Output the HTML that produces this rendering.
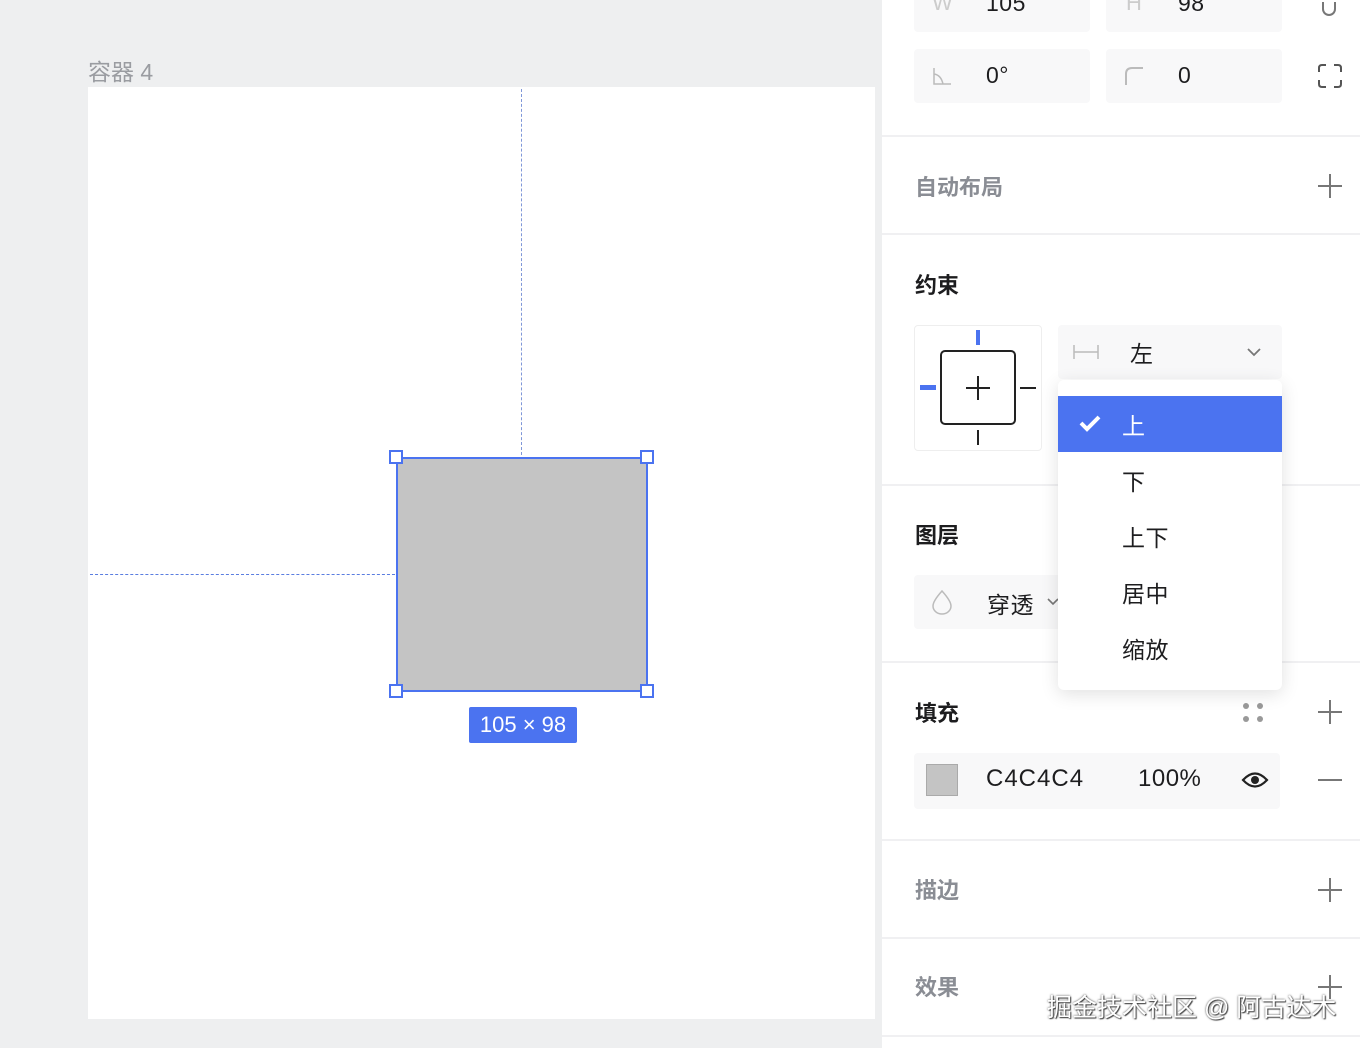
<!DOCTYPE html>
<html><head><meta charset="utf-8"><style>
*{margin:0;padding:0;box-sizing:border-box}
body{width:1360px;height:1048px;position:relative;overflow:hidden;background:#eeeff0;font-family:"Liberation Sans","Noto Sans CJK SC",sans-serif}
.a{position:absolute}
.panel{left:882px;top:0;width:478px;height:1048px;background:#fff}
.div{left:882px;width:478px;height:2px;background:#f0f0f2}
.field{background:#f8f8f9;border-radius:4px}
.t{font-size:23px;color:#1d1d1f;letter-spacing:.5px}
.h{font-size:22px;font-weight:bold;color:#1d1d1f}
.g{font-size:22px;color:#8a8d94;font-weight:bold}
.plus{width:24px;height:24px}
.plus:before{content:"";position:absolute;left:0;top:11px;width:24px;height:2px;background:#777}
.plus:after{content:"";position:absolute;left:11px;top:0;width:2px;height:24px;background:#777}
</style></head><body>
<div class="a" style="left:88px;top:53px;font-size:23px;color:#9a9ca1">容器 4</div>
<div class="a" style="left:88px;top:87px;width:787px;height:932px;background:#fff"></div>
<div class="a" style="left:521px;top:89px;height:366px;border-left:1px dashed #7f97d8"></div>
<div class="a" style="left:90px;top:574px;width:305px;border-top:1px dashed #5a7de0"></div>
<div class="a" style="left:396px;top:457px;width:252px;height:235px;background:#c4c4c4;border:2px solid #4b73f0"></div>
<div class="a" style="left:389px;top:450px;width:14px;height:14px;background:#fff;border:2px solid #4b73f0"></div>
<div class="a" style="left:640px;top:450px;width:14px;height:14px;background:#fff;border:2px solid #4b73f0"></div>
<div class="a" style="left:389px;top:684px;width:14px;height:14px;background:#fff;border:2px solid #4b73f0"></div>
<div class="a" style="left:640px;top:684px;width:14px;height:14px;background:#fff;border:2px solid #4b73f0"></div>
<div class="a" style="left:469px;top:707px;width:108px;height:36px;background:#4b73f0;color:#fff;font-size:22px;text-align:center;line-height:36px;border-radius:2px">105 × 98</div>

<div class="a panel"></div>
<div class="a field" style="left:914px;top:-20px;width:176px;height:52px"></div>
<div class="a field" style="left:1106px;top:-20px;width:176px;height:52px"></div>
<div class="a" style="left:932px;top:-10px;font-size:22px;color:#ccc">W</div>
<div class="a t" style="left:986px;top:-10px">105</div>
<div class="a" style="left:1126px;top:-10px;font-size:22px;color:#ccc">H</div>
<div class="a t" style="left:1178px;top:-10px">98</div>
<div class="a" style="left:1322px;top:2px;width:14px;height:14px;border:2px solid #777;border-top:none;border-radius:0 0 7px 7px"></div>
<div class="a field" style="left:914px;top:49px;width:176px;height:54px"></div>
<div class="a field" style="left:1106px;top:49px;width:176px;height:54px"></div>
<svg class="a" style="left:932px;top:66px" width="20" height="20"><path d="M2 2V18H19M2 8Q9 9 11 18" stroke="#bbb" stroke-width="1.5" fill="none"/></svg>
<div class="a t" style="left:986px;top:62px">0°</div>
<svg class="a" style="left:1124px;top:66px" width="20" height="20"><path d="M2 19V8Q2 2 8 2H19" stroke="#bbb" stroke-width="2" fill="none"/></svg>
<div class="a t" style="left:1178px;top:62px">0</div>
<svg class="a" style="left:1317px;top:63px" width="26" height="26"><path d="M2 9V5Q2 2 5 2H9M17 2H21Q24 2 24 5V9M24 17V21Q24 24 21 24H17M9 24H5Q2 24 2 21V17" stroke="#555" stroke-width="2" fill="none"/></svg>
<div class="a div" style="top:135px"></div>
<div class="a g" style="left:915px;top:170px">自动布局</div>
<div class="a plus" style="left:1318px;top:174px"></div>
<div class="a div" style="top:233px"></div>
<div class="a h" style="left:915px;top:268px">约束</div>
<div class="a" style="left:914px;top:325px;width:128px;height:126px;border:1px solid #eee;border-radius:4px;background:#fff"></div>
<div class="a" style="left:940px;top:350px;width:76px;height:75px;border:2px solid #222;border-radius:5px"></div>
<div class="a" style="left:977px;top:376px;width:2px;height:24px;background:#222"></div>
<div class="a" style="left:966px;top:387px;width:24px;height:2px;background:#222"></div>
<div class="a" style="left:976px;top:330px;width:4px;height:15px;background:#4b73f0"></div>
<div class="a" style="left:977px;top:430px;width:2px;height:15px;background:#222"></div>
<div class="a" style="left:920px;top:385px;width:16px;height:5px;background:#4b73f0"></div>
<div class="a" style="left:1020px;top:387px;width:16px;height:2px;background:#222"></div>
<div class="a field" style="left:1058px;top:325px;width:224px;height:54px"></div>
<svg class="a" style="left:1073px;top:343px" width="26" height="18"><path d="M1 2V16M25 2V16M1 9H25" stroke="#bbb" stroke-width="1.5" fill="none"/></svg>
<div class="a t" style="left:1130px;top:335px">左</div>
<svg class="a" style="left:1246px;top:346px" width="16" height="12"><path d="M2 3L8 9L14 3" stroke="#777" stroke-width="1.8" fill="none"/></svg>
<div class="a div" style="top:484px"></div>
<div class="a h" style="left:915px;top:518px">图层</div>
<div class="a field" style="left:914px;top:575px;width:176px;height:54px"></div>
<svg class="a" style="left:930px;top:588px" width="24" height="28"><path d="M12 3Q3 13 3 18A9 8 0 0 0 21 18Q21 13 12 3Z" stroke="#bbb" stroke-width="1.5" fill="none"/></svg>
<div class="a t" style="left:987px;top:586px">穿透</div>
<svg class="a" style="left:1046px;top:596px" width="14" height="12"><path d="M2 3L7 8L12 3" stroke="#777" stroke-width="1.6" fill="none"/></svg>
<div class="a div" style="top:661px"></div>
<div class="a h" style="left:915px;top:696px">填充</div>
<svg class="a" style="left:1242px;top:702px" width="24" height="22"><circle cx="4" cy="4" r="3" fill="#999"/><circle cx="18" cy="4" r="3" fill="#999"/><circle cx="4" cy="17" r="3" fill="#999"/><circle cx="18" cy="17" r="3" fill="#999"/></svg>
<div class="a plus" style="left:1318px;top:700px"></div>
<div class="a field" style="left:914px;top:753px;width:366px;height:56px"></div>
<div class="a" style="left:926px;top:764px;width:32px;height:32px;background:#c4c4c4;border:1px solid #aaa"></div>
<div class="a t" style="left:986px;top:765px;font-size:24px;letter-spacing:1px">C4C4C4</div>
<div class="a t" style="left:1138px;top:765px;font-size:24px">100%</div>
<svg class="a" style="left:1241px;top:770px" width="28" height="20"><path d="M2 10Q14 -3 26 10Q14 23 2 10Z" stroke="#222" stroke-width="2.2" fill="none"/><circle cx="14" cy="10" r="4" fill="#222"/></svg>
<div class="a" style="left:1318px;top:779px;width:24px;height:2px;background:#777"></div>
<div class="a div" style="top:839px"></div>
<div class="a g" style="left:915px;top:873px">描边</div>
<div class="a plus" style="left:1318px;top:878px"></div>
<div class="a div" style="top:937px"></div>
<div class="a g" style="left:915px;top:970px">效果</div>
<div class="a plus" style="left:1318px;top:975px"></div>
<div class="a div" style="top:1035px"></div>
<div class="a" style="left:1047px;top:988px;font-size:25px;color:#fff;text-shadow:0 0 2px #444,1px 1px 1px #444">掘金技术社区 @ 阿古达木</div>

<div class="a" style="left:1058px;top:380px;width:224px;height:310px;background:#fff;border-radius:6px;box-shadow:0 4px 18px rgba(0,0,0,.12)"></div>
<div class="a" style="left:1058px;top:396px;width:224px;height:56px;background:#4b73f0"></div>
<svg class="a" style="left:1079px;top:414px" width="22" height="18"><path d="M2 9L8 15L20 3" stroke="#fff" stroke-width="4" fill="none"/></svg>
<div class="a t" style="left:1122px;top:407px;color:#fff">上</div>
<div class="a t" style="left:1122px;top:463px">下</div>
<div class="a t" style="left:1122px;top:519px">上下</div>
<div class="a t" style="left:1122px;top:575px">居中</div>
<div class="a t" style="left:1122px;top:631px">缩放</div>
</body></html>
